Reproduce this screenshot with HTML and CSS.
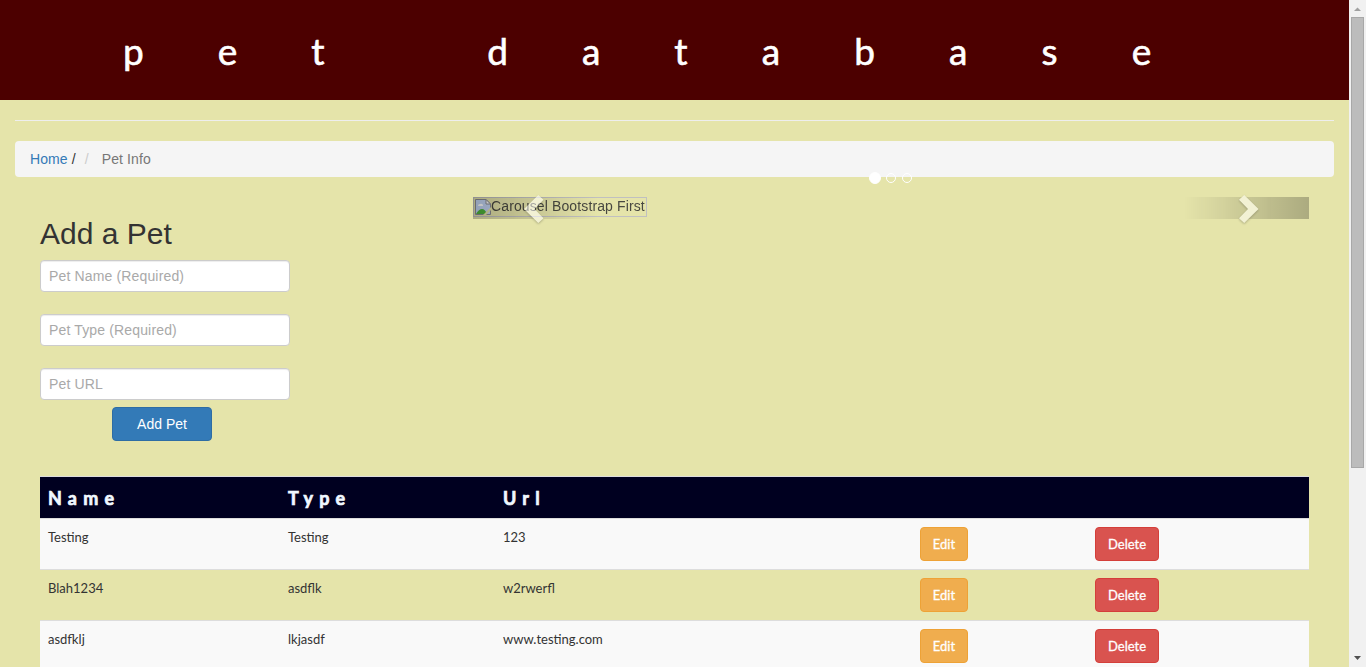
FILE: index.html
```html
<!DOCTYPE html>
<html lang="en">
<head>
<meta charset="utf-8">
<title>Pet Database</title>
<link rel="stylesheet" href="styles.css">
</head>
<body>
<div class="page">
  <header class="banner"><h1 class="banner-title">pet database</h1></header>
  <main class="container">
    <hr class="rule">
    <ol class="breadcrumb">
      <li><a class="crumb-link" href="#">Home</a> /</li>
      <li class="crumb-active">Pet Info</li>
    </ol>
    <div class="content">
      <div class="top-row">
        <form class="pet-form">
          <h2 class="form-title">Add a Pet</h2>
          <input class="field" type="text" placeholder="Pet Name (Required)">
          <input class="field" type="text" placeholder="Pet Type (Required)">
          <input class="field" type="text" placeholder="Pet URL">
          <button class="btn btn-primary" type="button">Add Pet</button>
        </form>
        <section class="carousel">
          <div class="missing-image">
            <svg class="missing-icon" width="16" height="16" viewBox="0 0 16 16">
              <path d="M.5 .5H11L15.500 5V15.500H.5Z" fill="#c3d5f3" stroke="#8b8c91"/>
              <path d="M11 .5V5H15.500Z" fill="#fff" stroke="#8b8c91"/>
              <path d="M3 7a2 2 0 0 1 2-2 2 2 0 0 1 3 2Z" fill="#fff"/>
              <path d="M1 15Q4 10 7 10T12 15Z" fill="#4fb53a"/>
              <path d="M8 16 16 8V11L11 16Z" fill="#e5e4aa"/>
            </svg><span class="missing-text">Carousel Bootstrap First</span>
          </div>
          <div class="dots"><i class="dot dot-active"></i><i class="dot"></i><i class="dot"></i></div>
          <a class="control control-prev" href="#" aria-label="Previous">
            <svg class="chevron" width="20" height="28" viewBox="0 0 20 28"><path d="M0 14 14.300 0 19.500 4.700 10.500 14 19.500 23.300 14.300 28Z" fill="#fff"/></svg>
          </a>
          <a class="control control-next" href="#" aria-label="Next">
            <svg class="chevron" width="20" height="28" viewBox="0 0 20 28"><path d="M19.500 14 5.200 0 0 4.700 9 14 0 23.300 5.200 28Z" fill="#fff"/></svg>
          </a>
        </section>
      </div>
      <table class="pets">
        <colgroup><col class="col-name"><col class="col-type"><col class="col-url"><col class="col-edit"><col></colgroup>
        <thead><tr><th>Name</th><th>Type</th><th>Url</th><th></th><th></th></tr></thead>
        <tbody>
          <tr><td>Testing</td><td>Testing</td><td>123</td><td><button class="btn btn-edit">Edit</button></td><td><button class="btn btn-delete">Delete</button></td></tr>
          <tr><td>Blah1234</td><td>asdflk</td><td>w2rwerfl</td><td><button class="btn btn-edit">Edit</button></td><td><button class="btn btn-delete">Delete</button></td></tr>
          <tr><td>asdfklj</td><td>lkjasdf</td><td>www.testing.com</td><td><button class="btn btn-edit">Edit</button></td><td><button class="btn btn-delete">Delete</button></td></tr>
        </tbody>
      </table>
    </div>
  </main>
</div>
<aside class="scrollbar" aria-hidden="true">
  <svg class="arrow" width="17" height="17" viewBox="0 0 17 17"><path d="M5 11 8.500 7.500 12 11Z" fill="#a0a0a0"/></svg>
  <div class="thumb"></div>
  <svg class="arrow arrow-down" width="17" height="17" viewBox="0 0 17 17"><path d="M5 6H12L8.500 10Z" fill="#505050"/></svg>
</aside>
</body>
</html>
```
FILE: styles.css
```css
* { box-sizing: border-box; }
body {
  margin: 0;
  display: flex;
  height: 667px;
  overflow: hidden;
  background: #e5e4aa;
  color: #333;
  font: 14px/20px "Liberation Sans", Arial, sans-serif;
}
.page { flex: 1; min-width: 0; height: 667px; overflow: hidden; }
.banner { height: 100px; background: #4c0000; padding: 29px 0 0 123px; overflow: hidden; }
.banner-title {
  margin: 0;
  color: #fff;
  font: 400 37px/44px "Gill Sans", Lato, sans-serif;
  letter-spacing: 74.100px;
  word-spacing: 5px;
  -webkit-text-stroke: .6px #fff;
  white-space: nowrap;
}
.container { padding: 0 15px; }
.rule { margin: 20px 0; border: 0; border-top: 1px solid #eee; }
.breadcrumb {
  display: flex;
  margin: 0 0 20px;
  padding: 8px 15px;
  height: 36px;
  list-style: none;
  background: #f5f5f5;
  border-radius: 4px;
  letter-spacing: .1px;
}
.crumb-link { color: #337ab7; text-decoration: none; }
.crumb-active { color: #777; }
.crumb-active::before { content: "/\00a0"; padding: 0 5px 0 9px; margin-right: 4px; color: #ccc; }
.content { padding: 0 25px; }
.top-row { display: flex; justify-content: space-between; height: 279px; }
.pet-form { display: flex; flex-direction: column; width: 250px; padding-top: 20px; }
.form-title { margin: 0 0 10px; font-size: 30px; font-weight: 400; line-height: 33px; }
.field {
  width: 250px;
  height: 32px;
  margin: 0 0 22px;
  padding: 4px 8px;
  border: 1px solid #ccc;
  border-radius: 4px;
  background: #fff;
  box-shadow: inset 0 1px 1px rgba(0, 0, 0, .075);
  font: 14px/20px "Liberation Sans", Arial, sans-serif;
  letter-spacing: .15px;
}
.field::placeholder { color: #a9a9a9; }
.btn {
  display: block;
  height: 34px;
  padding: 0;
  border: 1px solid;
  border-radius: 4px;
  color: #fff;
  font: 14px/20px "Liberation Sans", Arial, sans-serif;
}
.btn-primary { width: 100px; margin: -15px 0 0 72px; background: #337ab7; border-color: #2e6da4; }
.carousel { position: relative; width: 836px; height: 22px; }
.missing-image {
  display: flex;
  width: 174px;
  height: 20px;
  padding: 1px;
  border: 1px solid #c0c0c0;
  line-height: 15px;
  letter-spacing: .12px;
  white-space: nowrap;
}
.missing-icon { flex: none; }
.missing-text { opacity: .88; }
.dots { position: absolute; left: 396px; top: -25px; display: flex; align-items: center; gap: 6px; height: 12px; }
.dot { width: 10px; height: 10px; border: 1px solid #fff; border-radius: 50%; }
.dot-active { width: 12px; height: 12px; margin-right: -1px; background: #fff; }
.control { position: absolute; top: 0; width: 125px; height: 22px; opacity: .5; }
.control-prev { left: 0; padding-left: 51px; background: linear-gradient(to right, rgba(0, 0, 0, .5), transparent); }
.control-next { right: 0; padding-left: 55px; background: linear-gradient(to right, transparent, rgba(0, 0, 0, .5)); }
.chevron { display: block; margin-top: -2px; overflow: visible; filter: drop-shadow(0 1px 1px rgba(0, 0, 0, .5)); }
.pets {
  width: 100%;
  table-layout: fixed;
  border-collapse: separate;
  border-spacing: 0;
  font-family: "Gill Sans", Lato, sans-serif;
  font-size: 13px;
}
.col-name { width: 240px; }
.col-type { width: 215px; }
.col-url { width: 417px; }
.col-edit { width: 175px; }
.pets th {
  height: 42px;
  padding: 0 8px;
  border-top: 1px solid #ddd;
  background: #000020;
  color: #f0f8ff;
  text-align: left;
  font-size: 18px;
  font-weight: 700;
  letter-spacing: 6.200px;
  -webkit-text-stroke: .7px #f0f8ff;
}
.pets td { height: 51px; padding: 8px; border-top: 1px solid #ddd; vertical-align: top; }
.pets tbody tr:nth-child(odd) { background: #f9f9f9; }
.pets .btn {
  font-family: "Gill Sans", Lato, sans-serif;
  font-size: 13px;
  -webkit-text-stroke: .3px #fff;
}
.btn-edit { width: 48px; background: #f0ad4e; border-color: #eea236; }
.btn-delete { width: 64px; background: #d9534f; border-color: #d43f3a; }
.scrollbar { display: flex; flex-direction: column; width: 17px; background: #f1f1f1; }
.arrow { flex: none; }
.thumb { width: 13px; height: 451px; margin-left: 2px; background: #bcbcbc; border: 1px solid #a8a8a8; }
.arrow-down { margin-top: auto; }
```
